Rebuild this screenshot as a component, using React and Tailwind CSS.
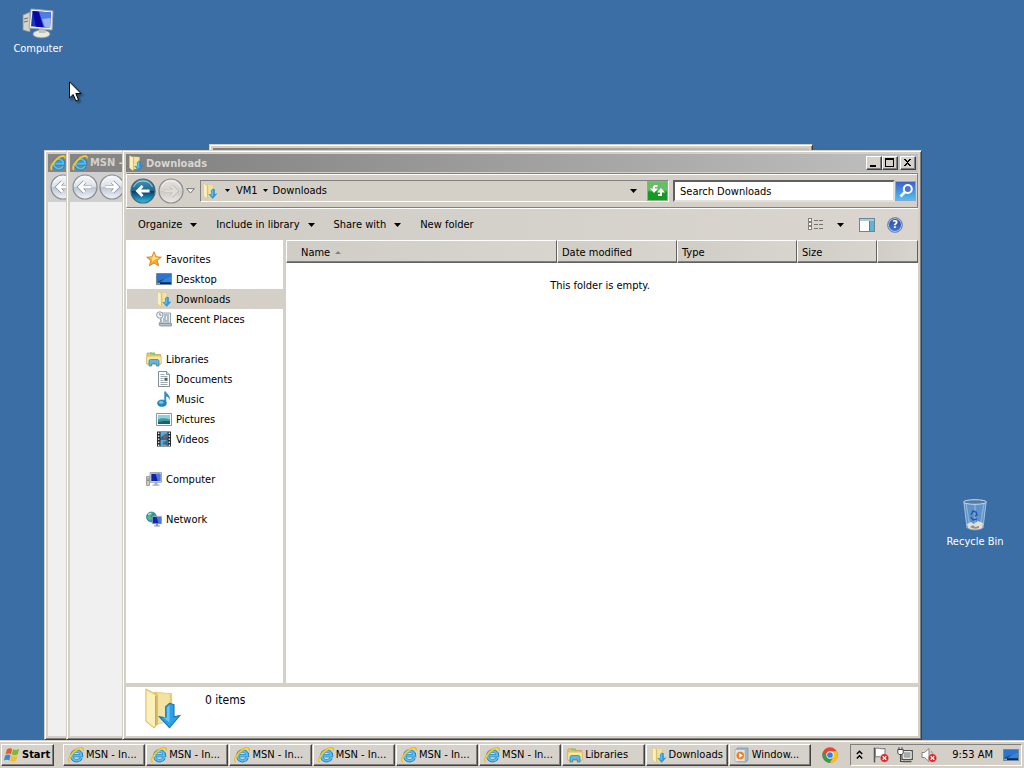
import React from "react";

const RAISED =
  "border border-t-white border-l-white border-r-[#404040] border-b-[#404040] bg-[#d6d2cb] shadow-[inset_-1px_-1px_0_#808080]";
const FRAME =
  "border border-[#d4d0c8] border-r-[#404040] border-b-[#404040] bg-[#d4d0c8] shadow-[inset_1px_1px_0_#ffffff,inset_-1px_-1px_0_#808080] p-[3px]";
const SUNKEN =
  "border border-t-[#808080] border-l-[#808080] border-r-white border-b-white";

function Svg({ size = 16, box = 16, className = "", children }) {
  return (
    <svg
      width={size}
      height={size}
      viewBox={`0 0 ${box} ${box}`}
      className={`shrink-0 ${className}`}
      aria-hidden="true"
    >
      {children}
    </svg>
  );
}

function Caret() {
  return (
    <svg width="7" height="4" viewBox="0 0 7 4" className="shrink-0" aria-hidden="true">
      <path d="M0 0h7L3.5 4z" fill="#000" />
    </svg>
  );
}

function SmallCaret() {
  return (
    <svg width="5" height="3" viewBox="0 0 5 3" className="shrink-0" aria-hidden="true">
      <path d="M0 0h5L2.5 3z" fill="#000" />
    </svg>
  );
}

function ExplorerE({ size = 16 }) {
  return (
    <Svg size={size}>
      <path
        d="M13.2 10.8A5 5 0 1 1 13.6 8.7H5.2"
        fill="none"
        stroke="#2277b4"
        strokeWidth="3.2"
      />
      <path
        d="M13 10.8A4.8 4.8 0 1 1 13.4 8.6H5.2"
        fill="none"
        stroke="#55bdec"
        strokeWidth="2.1"
      />
      <path
        d="M1.8 15C-.8 12.8 3 6.2 8 2.8c4-2.8 7.8-2.6 7.2.9"
        fill="none"
        stroke="#e9b91a"
        strokeWidth="1.7"
      />
      <path
        d="M1.8 14.3C.7 11.5 4 6.4 8.4 3.3c2.8-2 5.2-2.4 6.1-1.2"
        fill="none"
        stroke="#fbe35a"
        strokeWidth=".8"
      />
    </Svg>
  );
}

function DownloadsFolder({ size = 16 }) {
  return (
    <Svg size={size} box={32}>
      <path d="M9 3l14.500 1v22L10 29z" fill="#e6cd75" />
      <path d="M12 4l9.500.6V26L12 28z" fill="#f4e3a0" />
      <path d="M3 .8l9 4.700v22.500L9.500 31.300 3 26z" fill="#f1dc87" stroke="#cdb055" strokeWidth=".6" />
      <path d="M3.600 2l7 4v22.500l-1.400 1.500-5.600-4.600z" fill="#fbf0b9" />
      <path d="M10.800 6v23" stroke="#bc9c45" strokeWidth="1" />
      <path
        d="M18.500 14.500l3-2.500 3.500 1v9.500l4.500-1-8 9.500-8-8.500 5 .8z"
        fill="#2e9fe6"
        stroke="#1672b1"
        strokeWidth=".8"
      />
      <path d="M19.500 15l2-1.500V27l-5.500-4.500 3.500.8z" fill="#79cdf8" opacity=".8" />
    </Svg>
  );
}

function LibraryIcon() {
  return (
    <Svg>
      <path d="M1 2h5l1 1.5h7.5V13H1z" fill="#eccf66" stroke="#bd9b3d" strokeWidth=".7" />
      <path d="M4 1.5h5v2H4z" fill="#7dc879" />
      <path d="M.7 5h14.6v8H.7z" fill="#f8e99e" stroke="#cba94b" strokeWidth=".6" />
      <path d="M3 9.5l1.2-1h7.6l1.2 1V15h-2.7v-2.4H5.7V15H3z" fill="#63b7de" stroke="#287ea9" strokeWidth=".7" />
    </Svg>
  );
}

function StarIcon() {
  return (
    <Svg>
      <path
        d="M8 .8l2.1 5 5.2.4-4 3.4 1.3 5.2L8 12l-4.6 2.8 1.3-5.2-4-3.4 5.2-.4z"
        fill="#f9a92d"
        stroke="#d2761c"
        strokeWidth=".8"
      />
      <path d="M8 2.5l1.400 4 4 .4-4.300 1.600L6 11l.3-3.500-3.400-.7 3.500-.4z" fill="#ffe87a" />
    </Svg>
  );
}

function DesktopIcon() {
  return (
    <Svg>
      <path d="M.5 2.5h15v11H.5z" fill="#1c4f9d" stroke="#6f87a3" />
      <path d="M1 3h14v4C10 7 6 8 1 11z" fill="#2c74cf" />
      <path d="M6 10c3-3 6-3 9-4v5H5z" fill="#3ba0e8" opacity=".7" />
      <path d="M1 11.600h14V13H1z" fill="#13263f" />
      <path d="M1 11.600h3V13H1z" fill="#65c383" />
    </Svg>
  );
}

function RecentIcon() {
  return (
    <Svg>
      <path d="M5 2h9.500v10H5z" fill="#edf1f2" stroke="#819199" strokeWidth=".8" />
      <path d="M3 12.500h12.500V15H5c-2 0-2-1-2-2.500z" fill="#b4c0c4" stroke="#74838b" strokeWidth=".7" />
      <path d="M8 4h5M8 6h2M11 6h2M7 8h3M11 8h2M7 10h6" stroke="#718d9f" strokeWidth="1" />
      <circle cx="3.800" cy="4" r="3.200" fill="#f0f6fa" stroke="#7f939f" strokeWidth=".9" />
      <path d="M3.800 2v2.200h1.700" fill="none" stroke="#52656f" strokeWidth=".7" />
      <path d="M4 8l1 1.500L3.500 12" fill="none" stroke="#8a9ba4" />
    </Svg>
  );
}

function DocumentIcon() {
  return (
    <Svg>
      <path d="M2.500.5h8l3 3v12h-11z" fill="#fcfdfd" stroke="#72818a" strokeWidth=".9" />
      <path d="M10.500.5v3h3" fill="#d6dde0" stroke="#72818a" strokeWidth=".8" />
      <path d="M4.500 3.500h4M4.500 5.500h7M4.500 7.500h3M4.500 9.500h3M4.500 11.500h7M4.500 13.500h7" stroke="#84939a" strokeWidth=".8" />
      <path d="M8.500 6.800h3v3h-3z" fill="#4b5964" />
    </Svg>
  );
}

function MusicIcon() {
  return (
    <Svg>
      <path d="M8.300.5h1.700c.3 2.500 5.300 3.600 3.500 9-.2-2.400-1.400-3.700-3.300-4.100V12H8.300z" fill="#2f8fc5" />
      <ellipse cx="6" cy="12.200" rx="4.400" ry="3.300" fill="#1c8acb" stroke="#176a9d" strokeWidth=".5" />
      <ellipse cx="5.200" cy="11.400" rx="2.200" ry="1.300" fill="#70c8ee" />
    </Svg>
  );
}

function PictureIcon() {
  return (
    <Svg>
      <path d="M.5 2.500h15v12H.5z" fill="#f7fafb" stroke="#7d8b92" strokeWidth=".9" />
      <path d="M2 4h12v9H2z" fill="#8fd0dd" />
      <path d="M2 8.500c4-2 8-1 12 0V13H2z" fill="#3a9a9d" />
      <path d="M2 11c5-1 7-1.400 12-.8V13H2z" fill="#195f6c" />
    </Svg>
  );
}

function VideoIcon() {
  return (
    <Svg>
      <path d="M1 .5h14v15H1z" fill="#252a30" />
      <path d="M4.500 1h7v6.500h-7zM4.500 8.500h7V15h-7z" fill="#58aee0" />
      <path d="M5 6l3-2 3.500-2v5H5zM6 13l5-4v5z" fill="#2868a0" />
      <path d="M8 3l3 2-2 2H7zM7 10l3 1-2 2z" fill="#905e43" />
      <path d="M2.700 1.500v14M13.300 1.500v14" stroke="#f0f0f0" strokeWidth="1.300" strokeDasharray="1.500 1.500" />
    </Svg>
  );
}

function ComputerIcon({ size = 16 }) {
  return (
    <Svg size={size} box={32}>
      <path d="M1 8l7-3v20l-7-2z" fill="#d2d3c9" stroke="#8b8d88" strokeWidth=".8" />
      <path d="M2 12l4-1M2 15l4-1" stroke="#6b7068" strokeWidth="1" />
      <ellipse cx="19.500" cy="27" rx="8.500" ry="3.800" fill="#e9e9e2" stroke="#969a96" strokeWidth=".8" />
      <path d="M17 20h6l1 6h-7z" fill="#bfc3bf" />
      <path d="M9 2l22 2-1 19L7 21z" fill="#eef0ee" stroke="#a4aaa6" strokeWidth="1" />
      <path d="M10.500 4l18.500 1.500L28 21 9 19.200z" fill="#1736bd" />
      <path d="M17 4.600l12 .9L28 21l-6-.6z" fill="#4f7ce5" />
      <path d="M20 12l8.600-1L28 21l-5-.6z" fill="#aac4f5" opacity=".8" />
      <path d="M10.500 4l6 .5L21 20.300l-7-.6z" fill="#0808a7" />
    </Svg>
  );
}

function SmallComputerIcon() {
  return (
    <Svg>
      <path d="M.5 5.500h3v9h-3z" fill="#c9cabf" stroke="#85877f" strokeWidth=".7" />
      <path d="M1 8h2M1 9.500h2" stroke="#73766e" strokeWidth=".7" />
      <path d="M4 1.500h11.500v9.800H4z" fill="#d4dbe2" stroke="#8d99a3" strokeWidth=".8" />
      <path d="M5.300 2.800h9v7.200h-9z" fill="#1020a8" />
      <path d="M9.500 2.800h4.800V10h-2.500z" fill="#4c78db" />
      <path d="M8.500 11.500h3v2h2v1.200h-7v-1.200h2z" fill="#a7adb0" />
    </Svg>
  );
}

function NetworkIcon() {
  return (
    <Svg>
      <circle cx="5.500" cy="6" r="5" fill="#268bc5" stroke="#25659a" strokeWidth=".6" />
      <path d="M3 1.800l4-.5L6 4 4 5l2 2-2 3-3-3 1-2zM8 3l2 2-2 2z" fill="#51c078" />
      <path d="M2 3.500l3-1.200" stroke="#c8f3ee" strokeWidth="1.200" />
      <path d="M6.300 5.500h9.200v7.300H6.300z" fill="#1429a8" stroke="#a6b5c4" strokeWidth=".8" />
      <path d="M10.500 6h4.700v6h-2.700z" fill="#4b79da" />
      <path d="M10 13h2v1.500h2v1H8v-1h2z" fill="#8795a0" />
    </Svg>
  );
}

function MediaIcon() {
  return (
    <Svg>
      <path d="M3 1h11v12l-2 2H3z" fill="#8ebbd2" stroke="#7897a7" strokeWidth=".7" />
      <path d="M1 2.500h10v12H1z" fill="#e2e6e6" stroke="#9aa7ac" strokeWidth=".6" />
      <circle cx="6.300" cy="8.500" r="4.300" fill="#ef7d25" stroke="#f7e0cc" strokeWidth=".8" />
      <path d="M5 6l4 2.500L5 11z" fill="#fff" />
    </Svg>
  );
}

function ChromeIcon() {
  return (
    <Svg size={16} box={24}>
      <circle cx="12" cy="12" r="11.500" fill="#e94335" />
      <path d="M2 6.300A11.500 11.500 0 0 0 12 23.500l5-8.700-5 2.700-5-3z" fill="#2ba24c" />
      <path d="M12 6.500h10.100A11.500 11.500 0 0 1 12 23.500l5-8.700z" fill="#fbc116" />
      <circle cx="12" cy="12" r="5.500" fill="#fff" />
      <circle cx="12" cy="12" r="4.300" fill="#397ee8" />
    </Svg>
  );
}

function WindowsFlag() {
  return (
    <Svg>
      <path d="M3 2.200c2-1.400 3.500-1.300 5.100-.3L6.900 7.200C5.300 6.200 3.500 6.200 1.500 7.300z" fill="#e5592b" />
      <path d="M9 2.200c2 1.100 3.700 1 6.200-.3l-1.400 5.400c-2.200 1.300-4 1.200-6.100.2z" fill="#7fb63b" />
      <path d="M1.200 8.400c1.900-1.100 3.800-1.100 5.400-.1l-1.300 5.200c-1.800-1-3.500-1-5.400.1z" fill="#3a8bd0" />
      <path d="M7.400 8.600c2 1 3.800 1.100 6.100-.1l-1.400 5.300c-2.200 1.200-4 1.100-6 .1z" fill="#f5bf2b" />
    </Svg>
  );
}

function RoundArrow({ kind, flip = false }) {
  const active = kind === "active";
  const faded = kind === "faded";
  const id = `orb-${kind}-${flip ? "r" : "l"}`;
  return (
    <Svg size={26} box={26}>
      <defs>
        <linearGradient id={id} x1="0" y1="0" x2="0" y2="1">
          <stop offset="0" stopColor={active ? "#4c9abb" : faded ? "#e4e1dd" : "#f6f7fa"} />
          <stop offset=".48" stopColor={active ? "#1d6791" : faded ? "#d6d3cf" : "#dce1ea"} />
          <stop offset=".52" stopColor={active ? "#063e69" : faded ? "#cecbc7" : "#bdc5d2"} />
          <stop offset="1" stopColor={active ? "#2fc3e9" : faded ? "#ebe8e5" : "#f0f4fa"} />
        </linearGradient>
      </defs>
      <circle cx="13" cy="13" r="12" fill={`url(#${id})`} stroke={active ? "#42667a" : "#8b8c8e"} strokeWidth="1.200" />
      <path d="M3.500 9a10.500 10.500 0 0 1 19 0" fill="none" stroke="#fff" strokeWidth="1" opacity=".6" />
      <g transform={flip ? "matrix(-1 0 0 1 26 0)" : undefined}>
        <path
          d="M19.500 13H8M12.500 8L7.500 13l5 5"
          fill="none"
          stroke={faded ? "#bbb8b4" : "#7c8796"}
          strokeWidth={active ? 0 : 4}
        />
        <path
          d="M19.500 13H8M12.500 8L7.500 13l5 5"
          fill="none"
          stroke={faded ? "#dfdcd8" : "#fff"}
          strokeWidth="2.800"
        />
      </g>
    </Svg>
  );
}

function BrowserWindow({ className, label }) {
  return (
    <section aria-label="Browser" className={`absolute top-[150px] bottom-0 flex flex-col overflow-hidden ${FRAME} ${className}`}>
      <div className="flex h-[18px] shrink-0 items-center gap-[2px] overflow-hidden bg-[#858585] pl-[2px] text-[11px] font-bold whitespace-nowrap text-[#d4d0c8]">
        <ExplorerE />
        {label}
      </div>
      <div className="flex h-[30px] shrink-0 items-center gap-px overflow-hidden bg-[#cfcfcf] pl-[2px]">
        <RoundArrow kind="plain" />
        <RoundArrow kind="plain" flip />
      </div>
      <div className="flex-1 bg-[#f0f0f0]" />
    </section>
  );
}

function TitleButton({ label, children }) {
  return (
    <button type="button" aria-label={label} className={`flex h-[14px] w-4 items-center justify-center ${RAISED}`}>
      <svg width="10" height="10" viewBox="0 0 10 10" shapeRendering="crispEdges" aria-hidden="true">
        {children}
      </svg>
    </button>
  );
}

const NAV = [
  {
    name: "Favorites",
    icon: <StarIcon />,
    items: [
      ["Desktop", <DesktopIcon />],
      ["Downloads", <DownloadsFolder />],
      ["Recent Places", <RecentIcon />],
    ],
  },
  {
    name: "Libraries",
    icon: <LibraryIcon />,
    items: [
      ["Documents", <DocumentIcon />],
      ["Music", <MusicIcon />],
      ["Pictures", <PictureIcon />],
      ["Videos", <VideoIcon />],
    ],
  },
  { name: "Computer", icon: <SmallComputerIcon />, items: [] },
  { name: "Network", icon: <NetworkIcon />, items: [] },
];

function NavPane() {
  return (
    <nav className="w-[157px] shrink-0 bg-white pt-[9px]">
      <ul className="flex flex-col gap-5">
        {NAV.map((group) => (
          <li key={group.name}>
            <a href="#" className="flex h-5 items-center gap-1 pl-5">
              {group.icon}
              <span className="pt-px">{group.name}</span>
            </a>
            <ul>
              {group.items.map(([name, icon]) => (
                <li key={name}>
                  <a
                    href="#"
                    className={`ml-px flex h-5 items-center gap-1 pl-[29px] ${name === "Downloads" ? "bg-[#d4d0c8]" : ""}`}
                  >
                    {icon}
                    <span className="pt-px">{name}</span>
                  </a>
                </li>
              ))}
            </ul>
          </li>
        ))}
      </ul>
    </nav>
  );
}

function AddressRow() {
  return (
    <div className="mt-px flex h-[35px] shrink-0 items-center border border-t-[#808080] border-l-white border-r-[#808080] border-b-[#808080] pl-[3px] shadow-[inset_0_1px_0_#fff,0_1px_0_#fff]">
      <button type="button" aria-label="Back">
        <RoundArrow kind="active" />
      </button>
      <button type="button" aria-label="Forward" className="ml-[2px]">
        <RoundArrow kind="faded" flip />
      </button>
      <button type="button" aria-label="Recent pages" className="ml-[2px]">
        <svg width="9" height="6" viewBox="0 0 9 6" aria-hidden="true">
          <path d="M.7.700h7.600L4.500 5z" fill="#fff" stroke="#666" strokeWidth=".9" />
        </svg>
      </button>
      <div className={`ml-[5px] flex h-[22px] min-w-0 flex-1 items-center pl-px ${SUNKEN}`}>
        <DownloadsFolder />
        <button type="button" aria-label="Locations" className="ml-[7px]">
          <SmallCaret />
        </button>
        <button type="button" className="ml-[6px]">VM1</button>
        <button type="button" aria-label="Folders in VM1" className="ml-[5px]">
          <SmallCaret />
        </button>
        <button type="button" className="ml-[5px]">Downloads</button>
        <button type="button" aria-label="Previous locations" className="mr-[10px] ml-auto">
          <Caret />
        </button>
        <button type="button" aria-label="Refresh" className="flex h-5 w-[21px] items-center justify-center border border-[#8fae8c] bg-linear-to-b from-[#69bd66] from-45% to-[#159b22] to-55%">
          <Svg size={17} box={17}>
            <path d="M5 4v5" stroke="#fff" strokeWidth="2" />
            <path d="M1 6.500h8L5 11z" fill="#fff" />
            <path d="M8.500 4H5" stroke="#fff" strokeWidth="1.800" />
            <path d="M12 8v5H9" fill="none" stroke="#fff" strokeWidth="2" />
            <path d="M8 10.500h8L12 6z" fill="#fff" />
          </Svg>
        </button>
      </div>
      <input
        type="search"
        aria-label="Search Downloads"
        placeholder="Search Downloads"
        className="ml-1 h-[22px] w-[222px] border-2 border-t-[#606060] border-l-[#606060] border-r-[#e4e1dc] border-b-[#e4e1dc] bg-white px-[5px] pt-px text-black outline-none placeholder:text-black placeholder:opacity-100"
      />
      <button type="button" aria-label="Search" className="mr-px flex h-5 w-[21px] items-center justify-center border border-[#8aa5d8] bg-linear-to-b from-[#3e5fc9] to-[#4fc2ee]">
        <Svg size={18} box={18}>
          <circle cx="10.800" cy="7" r="4" fill="#4873cf" stroke="#fff" strokeWidth="2" />
          <path d="M8 10l-4.500 4.500" stroke="#fff" strokeWidth="2.600" />
        </Svg>
      </button>
    </div>
  );
}

function CommandBar() {
  return (
    <div className="mt-px flex h-[31px] shrink-0 items-center gap-[19px] bg-linear-to-r from-[#cfccc6] to-[#dad6cf] pr-[15px] pl-3">
      {["Organize", "Include in library", "Share with"].map((name) => (
        <button key={name} type="button" className="flex items-center gap-2 whitespace-nowrap">
          {name}
          <Caret />
        </button>
      ))}
      <button type="button" className="whitespace-nowrap">New folder</button>
      <button type="button" aria-label="Change your view" className="ml-auto">
        <svg width="16" height="13" viewBox="0 0 16 13" shapeRendering="crispEdges" aria-hidden="true">
          <path d="M.5.500h3v3h-3zM.5 4.500h3v3h-3zM.5 8.500h3v3h-3z" fill="#fff" stroke="#85827d" />
          <path d="M6 2.500h10M6 6.500h10M6 10.500h10" stroke="#77746f" strokeDasharray="4 1" />
        </svg>
      </button>
      <button type="button" aria-label="More view options" className="-ml-[6px]">
        <Caret />
      </button>
      <button type="button" aria-label="Show the preview pane" className="-ml-1">
        <svg width="16" height="14" viewBox="0 0 16 14" shapeRendering="crispEdges" aria-hidden="true">
          <path d="M.5.500h15v13H.5z" fill="#fff" stroke="#66879b" />
          <path d="M1 1h14v2H1z" fill="#a9cbd9" />
          <path d="M10 3h5v10h-5z" fill="#62b3ce" />
          <path d="M10.500 3v10" stroke="#4c829d" />
        </svg>
      </button>
      <button type="button" aria-label="Get help" className="-ml-[7px] flex h-4 w-4 items-center justify-center rounded-full border border-[#7b8fb8] bg-linear-to-b from-[#2b489f] to-[#4878cf] text-[11px] leading-none font-bold text-white shadow-[inset_0_0_0_1px_#a9c0e8]">
        ?
      </button>
    </div>
  );
}

const TH = "h-[23px] border border-t-white border-l-white border-r-[#606060] border-b-[#606060] bg-linear-to-r from-[#d0ccc6] to-[#d8d5ce] pt-[2px] pl-1 text-left font-normal shadow-[inset_0_-1px_0_#808080]";

function FileList() {
  return (
    <div className="min-w-0 flex-1 bg-white">
      <table className="w-full table-fixed border-separate border-spacing-0">
        <thead>
          <tr>
            <th className={TH}>
              <span className="flex items-center gap-[5px] pl-[10px]">
                Name
                <svg width="6" height="3" viewBox="0 0 6 3" aria-hidden="true">
                  <path d="M0 3h6L3 0z" fill="#85827d" />
                </svg>
              </span>
            </th>
            <th className={`w-[120px] ${TH}`}>Date modified</th>
            <th className={`w-[120px] ${TH}`}>Type</th>
            <th className={`w-[80px] ${TH}`}>Size</th>
            <td aria-hidden="true" className={`w-[41px] ${TH}`} />
          </tr>
        </thead>
        <tbody>
          <tr>
            <td colSpan={5} className="pt-4 pr-1 text-center">
              This folder is empty.
            </td>
          </tr>
        </tbody>
      </table>
    </div>
  );
}

function ExplorerWindow() {
  return (
    <section aria-label="Downloads" className={`absolute top-[150px] right-[102px] bottom-0 left-[122px] flex flex-col ${FRAME}`}>
      <header className="flex h-[18px] shrink-0 items-center bg-linear-to-r from-[#808080] to-[#c0c0c0] pr-[2px] pl-[2px]">
        <DownloadsFolder />
        <h1 className="ml-[2px] pt-px text-[11px] font-bold text-[#d8d5ce]">Downloads</h1>
        <div className="ml-auto flex">
          <TitleButton label="Minimize">
            <path d="M1 7h6v2H1z" />
          </TitleButton>
          <TitleButton label="Maximize">
            <path d="M0 0h9v9H0zM1 2v6h7V2z" fillRule="evenodd" />
          </TitleButton>
          <span className="w-[2px]" />
          <TitleButton label="Close">
            <path d="M1 1h2v1h1v1h1v-1h1v-1h2v1h-1v1h-1v1h-1v1h1v1h1v1h1v1H6v-1H5v-1H4v1H3v1H1v-1h1v-1h1v-1h1v-1H3v-1H2v-1H1z" />
          </TitleButton>
        </div>
      </header>
      <AddressRow />
      <CommandBar />
      <div className="flex min-h-0 flex-1 bg-[#d4d0c8]">
        <NavPane />
        <div className="w-[3px] shrink-0 bg-[#d4d0c8]" />
        <FileList />
      </div>
      <footer className="mt-1 flex h-[49px] shrink-0 items-start bg-white pl-[16px] text-[12px]">
        <div className="pt-px">
          <DownloadsFolder size={41} />
        </div>
        <p className="pt-[6px] pl-[22px]">0 items</p>
      </footer>
    </section>
  );
}

const TASKS = [
  ...Array.from({ length: 6 }, (_, i) => ({ id: `msn-${i}`, name: "MSN - In...", icon: <ExplorerE /> })),
  { id: "libraries", name: "Libraries", icon: <LibraryIcon /> },
  { id: "downloads", name: "Downloads", icon: <DownloadsFolder /> },
  { id: "media", name: "Window...", icon: <MediaIcon /> },
];

function BlockedBadge() {
  return (
    <>
      <circle cx="11.500" cy="11" r="4.300" fill="#d3262d" stroke="#f1c1bf" strokeWidth=".6" />
      <path d="M9.700 9.200l3.600 3.600M13.300 9.200l-3.600 3.600" stroke="#fff" strokeWidth="1.300" />
    </>
  );
}

function Taskbar() {
  return (
    <footer className="flex h-7 shrink-0 items-center bg-[#d4d0c8] pt-[2px] pr-[2px] pl-px shadow-[inset_0_1px_0_#d4d0c8,inset_0_2px_0_#fff]">
      <button type="button" className={`flex h-[22px] w-[53px] shrink-0 items-center gap-[2px] pl-[2px] font-bold ${RAISED}`}>
        <WindowsFlag />
        <span>Start</span>
      </button>
      <div className="ml-[9px] flex max-w-[748px] min-w-0 flex-1 gap-px">
        {TASKS.map((task) => (
          <button
            key={task.id}
            type="button"
            className={`flex h-[22px] min-w-0 flex-1 items-center gap-[2px] overflow-hidden pl-1 whitespace-nowrap ${RAISED}`}
          >
            {task.icon}
            {task.name}
          </button>
        ))}
      </div>
      <button type="button" aria-label="Chrome" className="ml-[11px] shrink-0">
        <ChromeIcon />
      </button>
      <div className={`ml-auto flex h-[22px] w-[172px] shrink-0 items-center pr-[2px] pl-[5px] ${SUNKEN}`}>
        <button type="button" aria-label="Show hidden icons">
          <svg width="7" height="10" viewBox="0 0 7 10" aria-hidden="true">
            <path d="M.8 4l2.700-2.700L6.200 4M.8 8.500l2.700-2.700 2.700 2.700" fill="none" stroke="#000" strokeWidth="1.500" />
          </svg>
        </button>
        <button type="button" aria-label="Action Center" className="ml-[10px]">
          <Svg>
            <path d="M1.500.5v15" stroke="#555" strokeWidth="1.500" />
            <path d="M2.300 1.500c3-1.500 5 1.300 9.700 0v8.500c-4 1-6-1.200-9.700 0z" fill="#fff" stroke="#666" strokeWidth=".9" />
            <BlockedBadge />
          </Svg>
        </button>
        <button type="button" aria-label="Network" className="ml-2">
          <Svg>
            <path d="M5 3.500h10.300v9H5z" fill="#a7aaa9" stroke="#4f5252" strokeWidth="1.200" />
            <path d="M6.200 4.700h7.900v6.600H6.200z" fill="none" stroke="#f4f4f4" strokeWidth="1" />
            <path d="M6 14.500h8.500" stroke="#555" strokeWidth="1.500" />
            <path d="M.8 2.500h5.400V6L5 7.500H2L.8 6z" fill="#fff" stroke="#484848" />
            <path d="M2 2.500V.3M5 2.500V.3M3.500 8v6.500H6" fill="none" stroke="#484848" strokeWidth="1.100" />
          </Svg>
        </button>
        <button type="button" aria-label="Volume muted" className="ml-2">
          <Svg>
            <path d="M1 5.500h2.500L8 1.500v13l-4.500-4H1z" fill="#fff" stroke="#777" strokeWidth=".9" />
            <path d="M10 4c1 1 1.500 2 1.500 3.500" fill="none" stroke="#888" />
            <BlockedBadge />
          </Svg>
        </button>
        <time className="ml-auto whitespace-nowrap">9:53 AM</time>
        <button type="button" aria-label="Show desktop" className="ml-[10px]">
          <DesktopIcon />
        </button>
      </div>
    </footer>
  );
}

function RecycleBin() {
  return (
    <Svg size={34} box={34}>
      <path d="M5.500 3.500L9 30.500c3 2.500 13 2.500 16 0l3.500-27z" fill="#78a6d1" opacity=".75" />
      <path d="M7 6l3 24c4 2 10 2 14 0L27 6z" fill="#5c90c8" opacity=".75" />
      <path d="M8 5l4 25M26 5l-4 25M17 5v25" stroke="#a5c9e8" strokeWidth="1.300" opacity=".6" />
      <path d="M9 26l4-2 3 2 4-3 5 2-.8 5c-4 2-10 2-14 0z" fill="#e2e0d4" />
      <path d="M12 29l3-2 2 2 4-1v2c-3 1-6 1-9-1z" fill="#9b9283" />
      <path d="M13 17l2-4 3 1 1 3-2 1M13 19l2 3 4-1" fill="none" stroke="#2457b4" strokeWidth="1.500" />
      <ellipse cx="17" cy="4" rx="11.500" ry="2.300" fill="#537ca4" stroke="#cbdbe7" strokeWidth="1" />
      <path d="M6 5l3 25M28 5l-3 25" stroke="#c1d6e8" strokeWidth=".7" />
    </Svg>
  );
}

export default function App() {
  return (
    <div className="flex h-screen flex-col overflow-hidden bg-[#3a6ea5] font-['DejaVu_Sans_Condensed','DejaVu_Sans',sans-serif] text-[11px] leading-[14px] text-black">
      <main className="relative min-h-0 flex-1">
        <a href="#" className="absolute top-[7px] left-[8px] flex w-[60px] flex-col items-center gap-[3px] text-white">
          <ComputerIcon size={32} />
          Computer
        </a>
        <a href="#" className="absolute top-[498px] right-[9px] flex w-20 flex-col items-center gap-[3px] whitespace-nowrap text-white">
          <RecycleBin />
          Recycle Bin
        </a>
        <section aria-label="Background window" className={`absolute top-[144px] right-[211px] left-[209px] h-20 ${FRAME}`}>
          <div className="h-[18px] bg-linear-to-r from-[#808080] to-[#c0c0c0]" />
        </section>
        <BrowserWindow className="left-[44px] w-[700px]" label="" />
        <BrowserWindow className="left-[66px] w-[700px]" label="MSN -" />
        <ExplorerWindow />
        <svg width="14" height="22" viewBox="0 0 14 22" className="absolute top-[81px] left-[69px] drop-shadow-[2px_2px_1px_rgba(0,0,0,0.4)]" aria-hidden="true">
          <path d="M.5.800v16.200l3.700-3.500 2.600 6.300 2.700-1.100-2.700-6.200h5.200z" fill="#fff" stroke="#000" strokeWidth="1" />
        </svg>
      </main>
      <Taskbar />
    </div>
  );
}
